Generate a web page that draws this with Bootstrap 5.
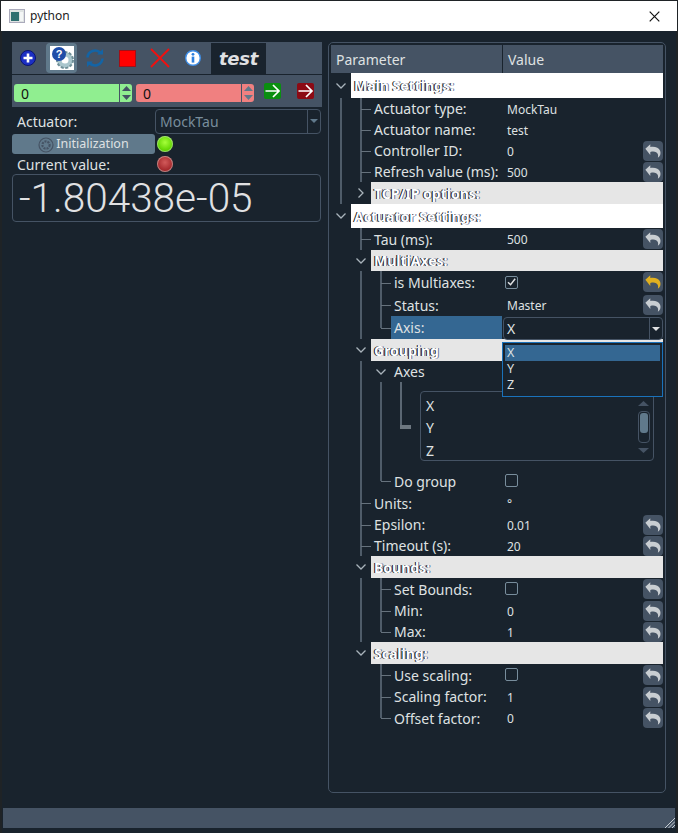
<!DOCTYPE html>
<html lang="en"><head><meta charset="utf-8"><title>python</title>
<link href="https://cdn.jsdelivr.net/npm/bootstrap@5.3.0/dist/css/bootstrap.min.css" rel="stylesheet">
<style>
html,body{margin:0;height:833px;overflow:hidden;background:#1f2326}
body{font-family:"Noto Sans","Open Sans",sans-serif;font-size:14px;color:#dfe1e2}
.win{width:678px;height:833px;padding:1px 1px 0;display:flex;flex-direction:column}
.tbar{height:30px;background:#fff;color:#222;font-size:12px;padding-left:8px;gap:5px}
.tbar .xbtn{margin-left:auto;margin-right:17px}
.lpane{width:310px;flex:none}
.rpane{width:338px;height:751px;border:1px solid #455364;border-radius:5px;padding:2px;flex:none;position:relative;margin-left:6px}
.sbar{height:20px;background:#455364;margin:15px 1px 0;position:relative;flex:none}
.wbody-wrap{flex:1;background:#19232d;margin:0 1px;display:flex;flex-direction:column}
.fbot{height:5px;flex:none}
.grip{position:absolute;right:0;bottom:0}
.tools{height:32px;background:#455364;padding-left:6px}
.tool{width:31px;height:30px;margin-right:2px;display:flex;align-items:center;justify-content:center;border-radius:4px}
.tool.on{background:#60798b}
.tabx{width:55px;height:31px;background:#19232d;align-self:flex-end;font:italic bold 18px "DejaVu Sans",sans-serif;letter-spacing:-.3px;color:#e0e1e3;text-align:center;line-height:32px;margin-left:1px}
.spins{height:32px;background:#455364;margin-top:1px;padding:9px 0 0 2px}
.spin{width:118px;height:18px;border-radius:3px;display:flex;color:#111;line-height:19px;margin-right:4px;overflow:hidden}
.spin .v{flex:1;padding-left:7px}
.spin .ud{width:13px;border-left:1px solid #455364;display:flex;flex-direction:column;justify-content:space-between;align-items:center;padding:2px 0}
.green{background:#90ee90}.red{background:#f08080}
.go{width:17px;height:16px;margin-top:-1px;border-radius:2px;display:flex;align-items:center;justify-content:center}
.actrow{height:26px;margin-top:1px;padding-left:5px}
.actrow .lb{width:138px}
.combo{border:1px solid #455364;border-radius:4px;display:flex;align-items:center}
.dis{width:166px;height:25px;color:#788d9c;padding-left:4px}
.combo .dd{margin-left:auto;width:13px;height:100%;border-left:1px solid #455364;display:flex;align-items:center;justify-content:center}
.initb{width:143px;height:20px;background:#60798b;border-radius:3px;gap:2px;font-size:12.5px;padding-top:1px}
.led{width:16px;height:16px;border-radius:50%;margin-left:2px;box-shadow:0 0 0 1px rgba(225,230,225,.45) inset}
.ledg{background:radial-gradient(circle at 50% 40%,#a6ff3a,#5fd400 65%,#3f8f10)}
.ledr{background:radial-gradient(circle at 50% 40%,#d25a5a,#a3272b 65%,#6b3a3e);margin-left:0}
.cur{height:20px;padding-left:5px}
.cur .lb{width:140px}
.lcd{width:309px;height:48px;border:1px solid #455364;border-radius:4px;font-size:40.5px;line-height:46px;padding-left:6px;color:#e0e1e3;font-family:Roboto,sans-serif;font-weight:300}
.hdr{height:28px;background:#455364}
.hdr div{padding-left:5px;line-height:30px}
.hdr .hcol{width:172px;border-right:1px solid #19232d}
.trow{display:flex;align-items:stretch}
.gc{width:20px;flex:none;position:relative}
.gc.v::before,.gc.t::before,.gc.l::before{content:"";position:absolute;left:9px;top:0;bottom:0;width:2px;background:#4f5c69}
.gc.l::before{bottom:50%}
.gc.t::after,.gc.l::after{content:"";position:absolute;left:10px;right:0;top:50%;height:1px;background:#66727d}
.gc.a{display:flex;align-items:center;justify-content:center}
.sect{flex:1;background:#e6e6e6;padding-left:3px;font-weight:700;font-size:14px;color:#fff;text-shadow:-1px 0 0 #111,1px 0 0 rgba(40,60,120,.7);display:flex;align-items:center;white-space:nowrap}
.sect.wh{background:#fff}
.nm{width:171px;flex:none;display:flex;white-space:nowrap}
.lbl{flex:1;padding-left:3px;display:flex;align-items:center}
.lbl.sel{background:#346792}
.val{flex:1;display:flex;position:relative;font-size:12px;padding-left:5px;align-items:center;padding-top:2px}
.rv{position:absolute;right:0;top:1px;width:20px;height:20px;background:#455364;border-radius:4px;display:flex;align-items:center;justify-content:center;color:#c9ced2}
.rv.y{color:#e0b020}
.cb{width:13px;height:13px;border:1px solid #788d9c;border-radius:2px;display:flex;align-items:center;justify-content:center;margin:-3px 0 0 -2px}
.axc{position:absolute;left:1px;top:1px;width:160px;height:23px;font-size:14px;padding-left:3px}
.axc .dd{width:13px}
.pop{position:absolute;left:173px;top:299px;width:161px;height:55px;border:1px solid #1a72bb;background:#19232d;padding:2px;z-index:2;font-size:12.5px;line-height:16px}
.pop div{padding-left:2px}
.pop .s{background:#346792}
.plist{margin:9px 0 0 9px;width:234px;height:70px;border:1px solid #455364;border-radius:4px;padding:3px 5px;line-height:22px;position:relative}
.plist .it{height:22.3px}
.scr{position:absolute;right:3px;top:9px;width:13px;height:52px;display:flex;flex-direction:column;align-items:center;justify-content:space-between}
.trk{width:12px;height:32px;border:1px solid #455364;border-radius:4px;padding:1px}
.thb{width:8px;height:20px;background:#60798b;border-radius:3px}
.g3{width:20px;flex:none;position:relative}
.g3::before{content:"";position:absolute;left:9px;top:0;height:46px;width:2px;background:#5b6773}
.g3::after{content:"";position:absolute;left:9px;top:43px;height:4px;width:11px;background:#6d7780}
</style></head><body>
<svg width="0" height="0" class="d-block position-absolute"><defs>
<symbol id="rv" viewBox="0 0 20 20"><path d="M1.500 7.500 7 2.500v3c5-.8 9.500.6 11 4.500 1 3-.2 6-2.600 7.500 .8-2.800.2-4.800-1.900-6-1.700-1-3.500-1-6.500-.5v3.500z" fill="currentColor"/></symbol>
<symbol id="chd" viewBox="0 0 12 12"><path d="M1.500 3.500 6 8l4.500-4.500" fill="none" stroke="#a9b3bb" stroke-width="1.300"/></symbol>
<symbol id="chr" viewBox="0 0 12 12"><path d="M3.500 1.500 8 6l-4.500 4.500" fill="none" stroke="#a9b3bb" stroke-width="1.300"/></symbol>
<symbol id="ck" viewBox="0 0 12 12"><path d="M2.200 6.200 5 9l5-6.500" fill="none" stroke="#e0e1e3" stroke-width="1.600"/></symbol>
<symbol id="arr" viewBox="0 0 17 16"><path d="M1.500 8H15M9 2l6 6-6 6" fill="none" stroke="#fff" stroke-width="1.700"/></symbol>
</defs></svg>
<div class="win">
 <div class="tbar d-flex align-items-center">
  <svg width="16" height="14" viewBox="0 0 16 14"><rect x=".5" y=".5" width="15" height="13" fill="#dfe3e3" stroke="#aab"/><rect x="2" y="3" width="8" height="9" fill="#2f6f70"/><rect x="11" y="3" width="3" height="9" fill="#f4f6f6"/></svg>
  <span>python</span>
  <svg class="xbtn" width="11" height="11" viewBox="0 0 11 11"><path d="M.7.7l9.600 9.600M10.300.7.7 10.300" stroke="#111" stroke-width="1.200"/></svg>
 </div>
 <div class="wbody-wrap">
 <div class="d-flex flex-grow-1" style="padding:11px 0 0 10px">
  <div class="lpane">
   <div class="tools d-flex align-items-center">
    <div class="tool" style="width:20px"><svg width="16" height="16" viewBox="0 0 16 16"><circle cx="8" cy="8" r="7.500" fill="#1c2fc4" stroke="#0b1470"/><path d="M3.500 8h9M8 3.500v9" stroke="#fff" stroke-width="2.600"/></svg></div>
    <div class="tool on" style="margin-left:6px"><svg width="24" height="24" viewBox="0 0 24 24"><rect width="24" height="24" fill="#fff"/><circle cx="15" cy="14" r="8" fill="#a9c6cd" stroke="#6f8f98" stroke-width="2" stroke-dasharray="3 1.600"/><circle cx="15" cy="14" r="3.500" fill="#fff"/><circle cx="9" cy="8" r="7" fill="#1f4da8"/><text x="9" y="12" font-size="11" font-weight="700" text-anchor="middle" fill="#fff" font-family="Liberation Sans">?</text></svg></div>
    <div class="tool"><svg width="20" height="20" viewBox="0 0 20 20"><path d="M2.500 9.500a7.500 7.500 0 0 1 13-4.500M17.500 10.500a7.500 7.500 0 0 1-13 4.500" fill="none" stroke="#1464a5" stroke-width="2.600"/><path d="M12 6.500h6V1zM8 13.500H2V19z" fill="#1464a5"/></svg></div>
    <div class="tool"><svg width="17" height="17" viewBox="0 0 17 17"><rect x=".5" y=".5" width="16" height="16" fill="#f00" stroke="#a01018"/></svg></div>
    <div class="tool" style="margin-left:-1px"><svg width="20" height="20" viewBox="0 0 20 20"><path d="M1 1l18 18M19 1 1 19" stroke="#f01010" stroke-width="1.800"/></svg></div>
    <div class="tool"><svg width="16" height="16" viewBox="0 0 16 16"><circle cx="8" cy="8" r="7.300" fill="#fff" stroke="#3f8fe8" stroke-width="1.400"/><circle cx="8" cy="4.300" r="1.400" fill="#2b7fe0"/><path d="M8 6.600v6" stroke="#2b7fe0" stroke-width="2.600"/></svg></div>
    <div class="tabx">test</div>
   </div>
   <div class="spins d-flex">
    <div class="spin green"><div class="v">0</div><div class="ud"><svg width="9" height="5"><path d="M0 5 4.500 0 9 5z" fill="#455364"/></svg><svg width="9" height="5"><path d="M0 0 4.500 5 9 0z" fill="#455364"/></svg></div></div>
    <div class="spin red" style="margin-right:10px"><div class="v">0</div><div class="ud"><svg width="9" height="5"><path d="M0 5 4.500 0 9 5z" fill="#60798b"/></svg><svg width="9" height="5"><path d="M0 0 4.500 5 9 0z" fill="#60798b"/></svg></div></div>
    <div class="go" style="background:#0a8f10"><svg width="17" height="16"><use href="#arr"/></svg></div>
    <div class="go" style="background:#8c0a14;margin-left:16px"><svg width="17" height="16"><use href="#arr"/></svg></div>
   </div>
   <div class="actrow d-flex align-items-center"><div class="lb">Actuator:</div><div class="combo dis">MockTau<span class="dd"><svg width="8" height="4"><path d="M0 0h8L4 4z" fill="#60798b"/></svg></span></div></div>
   <div class="d-flex align-items-center"><div class="initb d-flex align-items-center justify-content-center"><svg width="16" height="16" viewBox="0 0 16 16"><circle cx="8" cy="8" r="7" fill="none" stroke="#455364" stroke-width="1.200"/><circle cx="8" cy="8" r="3.600" fill="none" stroke="#455364" stroke-width="2.200" stroke-dasharray="2 1"/></svg><span>Initialization</span></div><div class="led ledg"></div></div>
   <div class="cur d-flex align-items-center"><div class="lb">Current value:</div><div class="led ledr"></div></div>
   <div class="lcd">-1.80438e-05</div>
  </div>
  <div class="rpane">
   <div class="hdr d-flex"><div class="hcol">Parameter</div><div>Value</div></div>
   <div class="trow" style="height:25px"><div class="gc a"><svg width="12" height="12"><use href="#chd"/></svg></div><div class="sect wh">Main Settings:</div></div>
   <div class="trow" style="height:21px"><div class="nm"><div class="gc v"></div><div class="gc t"></div><div class="lbl">Actuator type:</div></div><div class="val">MockTau</div></div>
   <div class="trow" style="height:21px"><div class="nm"><div class="gc v"></div><div class="gc t"></div><div class="lbl">Actuator name:</div></div><div class="val">test</div></div>
   <div class="trow" style="height:21px"><div class="nm"><div class="gc v"></div><div class="gc t"></div><div class="lbl">Controller ID:</div></div><div class="val">0<span class="rv"><svg width="18" height="18"><use href="#rv"/></svg></span></div></div>
   <div class="trow" style="height:21px"><div class="nm"><div class="gc v"></div><div class="gc t"></div><div class="lbl">Refresh value (ms):</div></div><div class="val">500<span class="rv"><svg width="18" height="18"><use href="#rv"/></svg></span></div></div>
   <div class="trow" style="height:22px"><div class="gc v"></div><div class="gc a"><svg width="12" height="12"><use href="#chr"/></svg></div><div class="sect">TCP/IP options:</div></div>
   <div class="trow" style="height:24px"><div class="gc a"><svg width="12" height="12"><use href="#chd"/></svg></div><div class="sect wh">Actuator Settings:</div></div>
   <div class="trow" style="height:22px"><div class="nm"><div class="gc"></div><div class="gc t"></div><div class="lbl">Tau (ms):</div></div><div class="val">500<span class="rv"><svg width="18" height="18"><use href="#rv"/></svg></span></div></div>
   <div class="trow" style="height:21px"><div class="gc"></div><div class="gc a"><svg width="12" height="12"><use href="#chd"/></svg></div><div class="sect">MultiAxes:</div></div>
   <div class="trow" style="height:23px"><div class="nm"><div class="gc"></div><div class="gc v"></div><div class="gc t"></div><div class="lbl">is Multiaxes:</div></div><div class="val"><span class="cb"><svg width="12" height="12"><use href="#ck"/></svg></span><span class="rv y"><svg width="18" height="18"><use href="#rv"/></svg></span></div></div>
   <div class="trow" style="height:22px"><div class="nm"><div class="gc"></div><div class="gc v"></div><div class="gc t"></div><div class="lbl">Status:</div></div><div class="val">Master<span class="rv"><svg width="18" height="18"><use href="#rv"/></svg></span></div></div>
   <div class="trow" style="height:23px"><div class="nm"><div class="gc"></div><div class="gc v"></div><div class="gc l"></div><div class="lbl sel">Axis:</div></div><div class="val"><div class="combo axc">X<span class="dd"><svg width="8" height="4"><path d="M0 0h8L4 4z" fill="#e0e1e3"/></svg></span></div></div></div>
   <div class="trow" style="height:22px"><div class="gc"></div><div class="gc a"><svg width="12" height="12"><use href="#chd"/></svg></div><div class="sect">Grouping</div></div>
   <div class="trow" style="height:21px"><div class="nm"><div class="gc"></div><div class="gc v"></div><div class="gc a"><svg width="12" height="12"><use href="#chd"/></svg></div><div class="lbl">Axes</div></div></div>
   <div class="trow" style="height:88px"><div class="gc"></div><div class="gc v"></div><div class="gc v"></div><div class="g3"></div><div><div class="plist"><div class="it">X</div><div class="it">Y</div><div class="it">Z</div><div class="scr"><svg width="11" height="5"><path d="M0 5 5.500 0 11 5z" fill="#455364"/></svg><div class="trk"><div class="thb"></div></div><svg width="11" height="5"><path d="M0 0 5.500 5 11 0z" fill="#455364"/></svg></div></div></div></div>
   <div class="trow" style="height:22px"><div class="nm"><div class="gc"></div><div class="gc v"></div><div class="gc l"></div><div class="lbl">Do group</div></div><div class="val"><span class="cb"></span></div></div>
   <div class="trow" style="height:22px"><div class="nm"><div class="gc"></div><div class="gc t"></div><div class="lbl">Units:</div></div><div class="val">°</div></div>
   <div class="trow" style="height:21px"><div class="nm"><div class="gc"></div><div class="gc t"></div><div class="lbl">Epsilon:</div></div><div class="val">0.01<span class="rv"><svg width="18" height="18"><use href="#rv"/></svg></span></div></div>
   <div class="trow" style="height:21px"><div class="nm"><div class="gc"></div><div class="gc t"></div><div class="lbl">Timeout (s):</div></div><div class="val">20<span class="rv"><svg width="18" height="18"><use href="#rv"/></svg></span></div></div>
   <div class="trow" style="height:22px"><div class="gc"></div><div class="gc a"><svg width="12" height="12"><use href="#chd"/></svg></div><div class="sect">Bounds:</div></div>
   <div class="trow" style="height:22px"><div class="nm"><div class="gc"></div><div class="gc v"></div><div class="gc t"></div><div class="lbl">Set Bounds:</div></div><div class="val"><span class="cb"></span><span class="rv"><svg width="18" height="18"><use href="#rv"/></svg></span></div></div>
   <div class="trow" style="height:21px"><div class="nm"><div class="gc"></div><div class="gc v"></div><div class="gc t"></div><div class="lbl">Min:</div></div><div class="val">0<span class="rv"><svg width="18" height="18"><use href="#rv"/></svg></span></div></div>
   <div class="trow" style="height:21px"><div class="nm"><div class="gc"></div><div class="gc v"></div><div class="gc l"></div><div class="lbl">Max:</div></div><div class="val">1<span class="rv"><svg width="18" height="18"><use href="#rv"/></svg></span></div></div>
   <div class="trow" style="height:22px"><div class="gc"></div><div class="gc a"><svg width="12" height="12"><use href="#chd"/></svg></div><div class="sect">Scaling:</div></div>
   <div class="trow" style="height:22px"><div class="nm"><div class="gc"></div><div class="gc"></div><div class="gc t"></div><div class="lbl">Use scaling:</div></div><div class="val"><span class="cb"></span><span class="rv"><svg width="18" height="18"><use href="#rv"/></svg></span></div></div>
   <div class="trow" style="height:21px"><div class="nm"><div class="gc"></div><div class="gc"></div><div class="gc t"></div><div class="lbl">Scaling factor:</div></div><div class="val">1<span class="rv"><svg width="18" height="18"><use href="#rv"/></svg></span></div></div>
   <div class="trow" style="height:22px"><div class="nm"><div class="gc"></div><div class="gc"></div><div class="gc l"></div><div class="lbl">Offset factor:</div></div><div class="val">0<span class="rv"><svg width="18" height="18"><use href="#rv"/></svg></span></div></div>
   <div class="pop"><div class="s">X</div><div>Y</div><div>Z</div></div>
  </div>
 </div>
 <div class="sbar"><svg class="grip" width="11" height="11" viewBox="0 0 11 11"><path d="M1 11 11 1M4.500 11 11 4.500M8 11l3-3" stroke="#c8ced3" stroke-width="1"/></svg></div>
 <div class="fbot"></div>
 </div>
</div>
</body></html>
